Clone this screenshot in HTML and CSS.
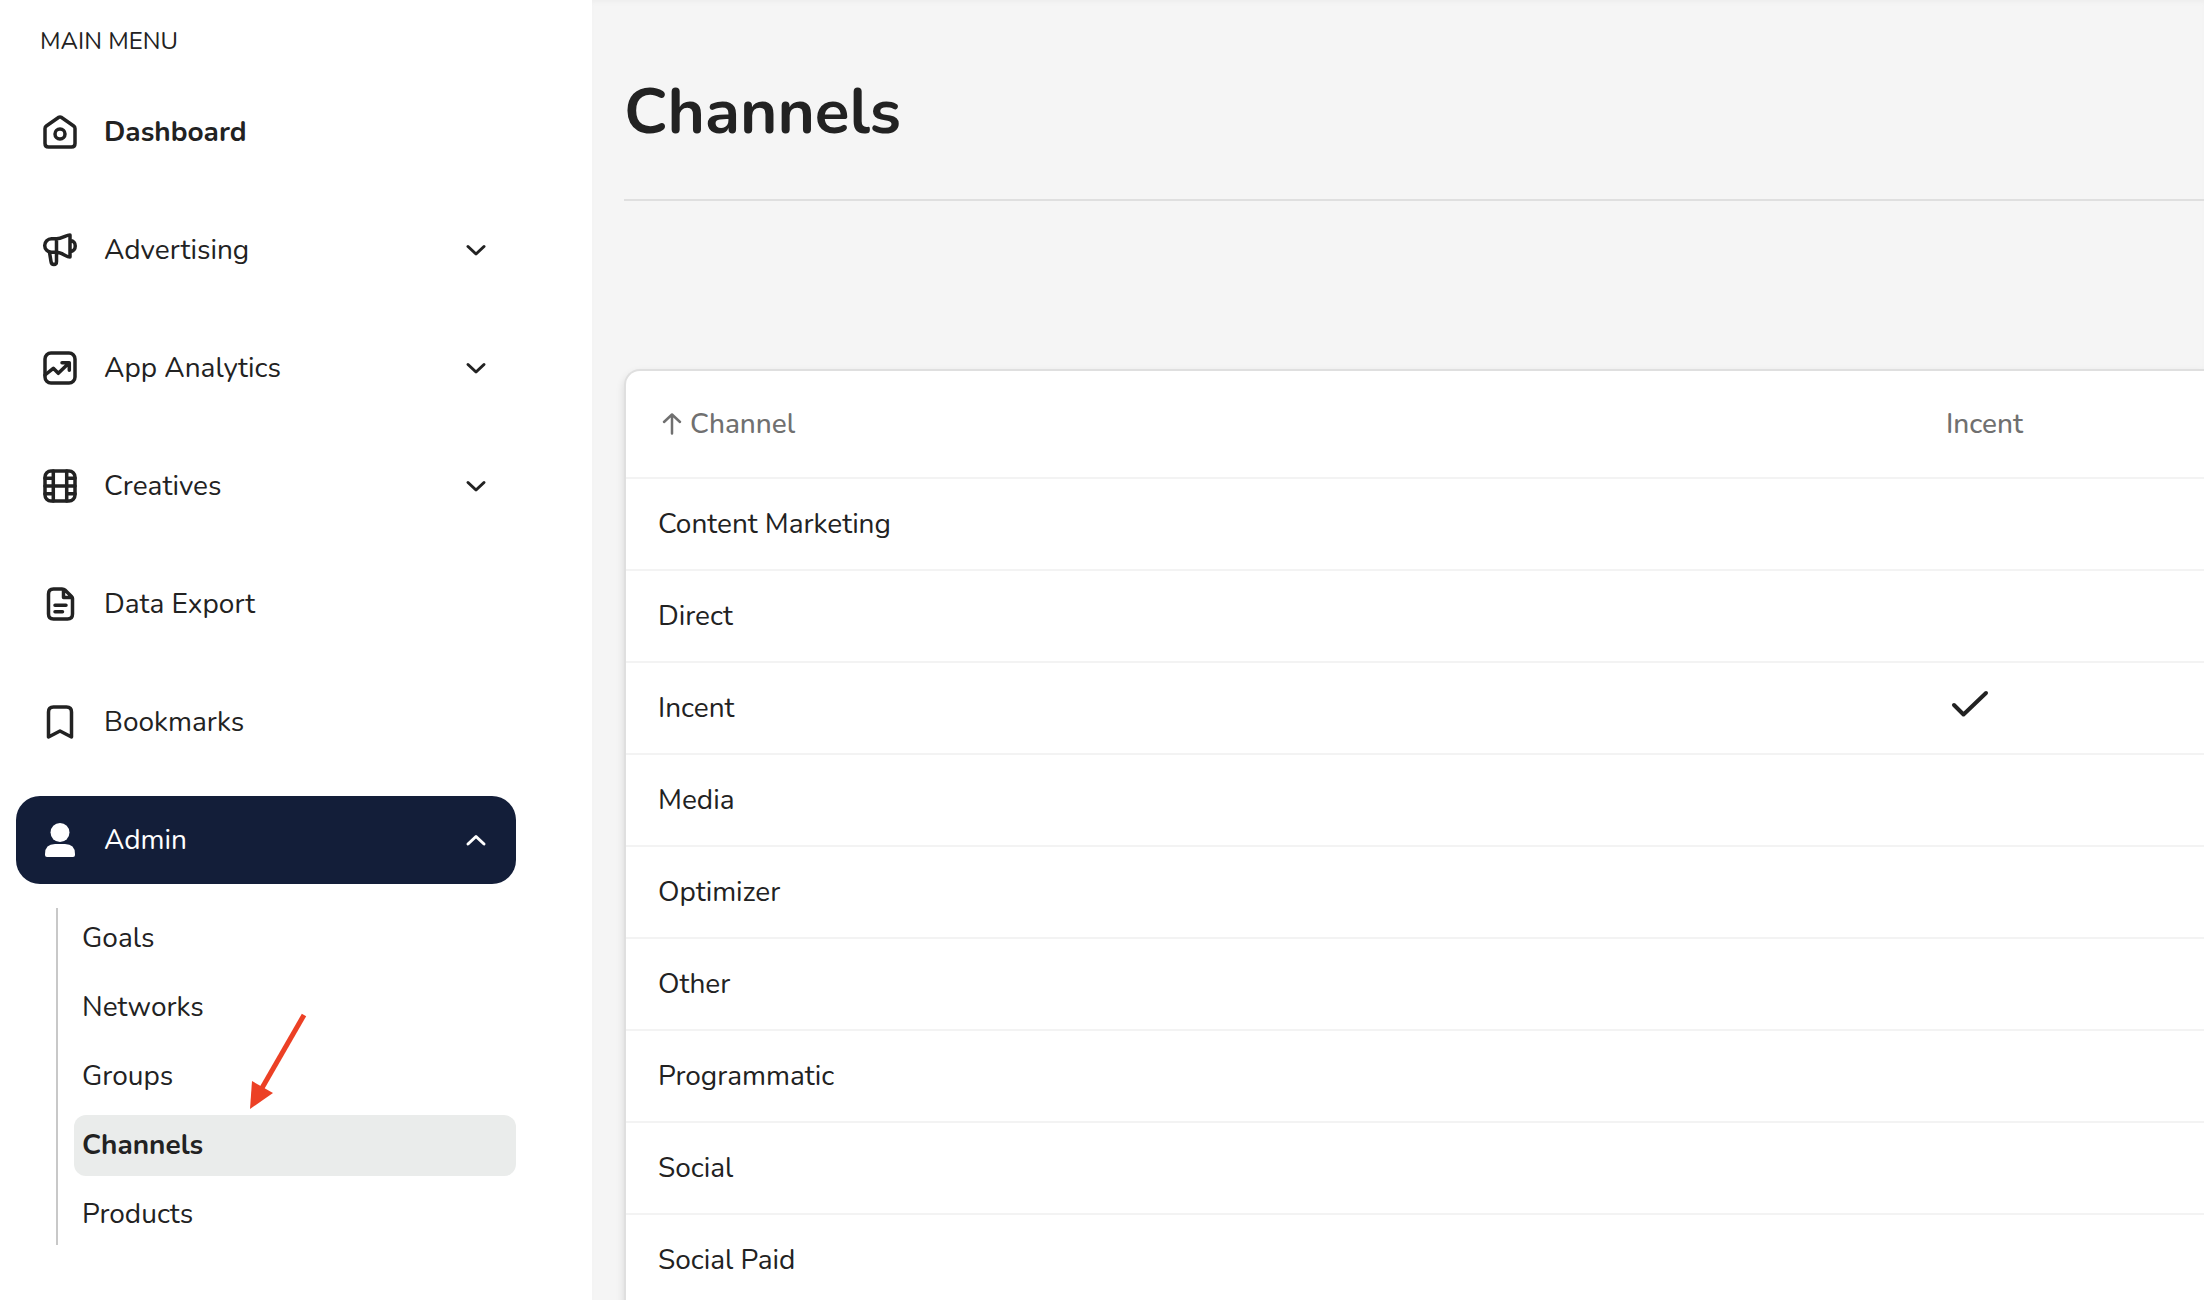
FILE: index.html
```html
<!DOCTYPE html>
<html lang="en">
<head>
<meta charset="utf-8">
<meta name="viewport" content="width=device-width, initial-scale=1">
<title>Channels</title>
<link rel="stylesheet" href="styles.css">
</head>
<body>
<div class="app">
  <aside class="sidebar">
    <h2 class="menu-title">MAIN MENU</h2>
    <nav class="menu" aria-label="Main menu">
      <a class="item item-strong" href="#dashboard">
        <svg class="icon" viewBox="0 0 36 36"><path d="M3 14.500Q3 13 4.300 12L16.800 3.300Q18 2.500 19.200 3.300L31.700 12Q33 13 33 14.500V29.500Q33 33 29.500 33H6.500Q3 33 3 29.500Z"/><circle cx="18" cy="20" r="5"/></svg>
        <span class="label">Dashboard</span>
      </a>
      <button class="item" type="button">
        <svg class="icon" viewBox="0 0 36 36"><path d="M14.500 6.700H9.500A6.800 6.800 0 0 0 9.500 20.300H14.500ZM14.500 6.700C20 6.700 24 3 28 3V25C24 25 20 20.300 14.500 20.300M28 8.500C35 8.500 35 19.500 28 19.500M7.500 20.300L9 29.500C9.500 33.500 14.500 33.500 14.500 29.500V20.300"/></svg>
        <span class="label">Advertising</span>
        <svg class="chevron" viewBox="0 0 24 24"><path d="M4 8.500L12 16L20 8.500"/></svg>
      </button>
      <button class="item" type="button">
        <svg class="icon" viewBox="0 0 36 36"><rect x="3" y="3" width="30" height="30" rx="6"/><path d="M3 25L11.300 18.300L16.300 23.300L27 13M20 12.800H27.300V20.300"/></svg>
        <span class="label">App Analytics</span>
        <svg class="chevron" viewBox="0 0 24 24"><path d="M4 8.500L12 16L20 8.500"/></svg>
      </button>
      <button class="item" type="button">
        <svg class="icon" viewBox="0 0 36 36"><rect x="3" y="3" width="30" height="30" rx="6"/><path d="M11.300 3V33M24.700 3V33M3 18H33M3 10.300H11.300M3 25.700H11.300M24.700 10.300H33M24.700 25.700H33"/></svg>
        <span class="label">Creatives</span>
        <svg class="chevron" viewBox="0 0 24 24"><path d="M4 8.500L12 16L20 8.500"/></svg>
      </button>
      <a class="item" href="#data-export">
        <svg class="icon" viewBox="0 0 36 36"><path d="M20 3H11.500Q6.500 3 6.500 8V28Q6.500 33 11.500 33H25.500Q30.500 33 30.500 28V12.500Q30.500 11.500 29.500 10.500L23 4Q22 3 20 3ZM21.500 3.500V11.500H30M13 19.300H24M13 25.700H20.500"/></svg>
        <span class="label">Data Export</span>
      </a>
      <a class="item" href="#bookmarks">
        <svg class="icon" viewBox="0 0 36 36"><path d="M6.500 33V8Q6.500 3 11.500 3H24.500Q29.500 3 29.500 8V33L18 27Z"/></svg>
        <span class="label">Bookmarks</span>
      </a>
      <button class="item item-active" type="button" aria-expanded="true">
        <svg class="icon icon-solid" viewBox="0 0 36 36"><circle cx="18" cy="10.500" r="9.500"/><path d="M3 32Q3 22 13 22H23Q33 22 33 32V33Q33 35 31 35H5Q3 35 3 33Z"/></svg>
        <span class="label">Admin</span>
        <svg class="chevron" viewBox="0 0 24 24"><path d="M4 16L12 8.500L20 16"/></svg>
      </button>
    </nav>
    <div class="submenu">
      <a class="subitem" href="#goals">Goals</a>
      <a class="subitem" href="#networks">Networks</a>
      <a class="subitem" href="#groups">Groups</a>
      <a class="subitem subitem-current" href="#channels" aria-current="page">Channels
        <svg class="pointer" viewBox="0 0 60 96"><path class="pointer-line" d="M54 2L12 75"/><path class="pointer-head" d="M0 96L2 68L23 80Z"/></svg>
      </a>
      <a class="subitem" href="#products">Products</a>
    </div>
  </aside>
  <main class="content">
    <h1 class="page-title">Channels</h1>
    <div class="card">
      <table class="table">
        <thead>
          <tr>
            <th scope="col"><button class="sort" type="button"><svg class="sort-icon" viewBox="0 0 24 24"><path d="M12 21.500V3M4 10L12 2.500L20 10"/></svg>Channel</button></th>
            <th scope="col" class="col-incent">Incent</th>
          </tr>
        </thead>
        <tbody>
          <tr><td>Content Marketing</td><td></td></tr>
          <tr><td>Direct</td><td></td></tr>
          <tr><td>Incent</td><td><svg class="check" role="img" aria-label="Yes" viewBox="0 0 48 36"><path d="M8 19L17.500 28.500L40 7"/></svg></td></tr>
          <tr><td>Media</td><td></td></tr>
          <tr><td>Optimizer</td><td></td></tr>
          <tr><td>Other</td><td></td></tr>
          <tr><td>Programmatic</td><td></td></tr>
          <tr><td>Social</td><td></td></tr>
          <tr><td>Social Paid</td><td></td></tr>
        </tbody>
      </table>
    </div>
  </main>
</div>
</body>
</html>
```
FILE: styles.css
```css
* {
  box-sizing: border-box;
}

body {
  margin: 0;
  background: #fff;
  color: #222;
  font: 400 28px/40px Nunito, Lato, sans-serif;
}

a {
  color: inherit;
  text-decoration: none;
}

button {
  border: 0;
  background: none;
  color: inherit;
  font: inherit;
  text-align: left;
}

svg {
  fill: none;
  stroke: currentColor;
  stroke-width: 3;
  stroke-linecap: round;
  stroke-linejoin: round;
}

.app {
  display: grid;
  grid-template-columns: 592px minmax(0, 1fr);
  height: 100vh;
  overflow: hidden;
}

/* Sidebar */

.sidebar {
  padding: 24px 76px 24px 16px;
}

.menu-title {
  margin: 0 0 30px;
  padding-left: 24px;
  font-size: 24px;
  line-height: 34px;
  font-weight: 400;
}

.menu {
  display: flex;
  flex-direction: column;
  gap: 30px;
}

.item {
  display: flex;
  align-items: center;
  gap: 26px;
  width: 100%;
  height: 88px;
  padding: 0 28px 0 26px;
  border-radius: 24px;
}

.item-strong {
  font-weight: 700;
}

.item-active {
  background: #131e39;
  color: #fff;
}

.icon {
  flex: none;
  width: 36px;
  height: 36px;
  stroke-width: 3.5;
}

.icon-solid {
  fill: currentColor;
  stroke: none;
}

.label {
  flex: 1;
}

.chevron {
  flex: none;
  width: 24px;
  height: 24px;
}

.submenu {
  display: flex;
  flex-direction: column;
  gap: 8px;
  margin: 24px 0 0 40px;
  padding-left: 16px;
  border-left: 2px solid #c8c8c8;
}

.subitem {
  position: relative;
  height: 61px;
  padding: 10px 8px;
  border-radius: 12px;
}

.subitem-current {
  background: #eaeceb;
  font-weight: 700;
}

/* Callout arrow that floats over the submenu */
.pointer {
  position: absolute;
  left: 176px;
  bottom: 67px;
  width: 60px;
  height: 96px;
}

.pointer-line {
  stroke: #ec4025;
  stroke-width: 5;
  stroke-linecap: butt;
}

.pointer-head {
  fill: #ec4025;
  stroke: none;
}

/* Content */

.content {
  padding: 64px 0 0 32px;
  background: #f5f5f5;
  box-shadow: inset 0 4px 4px -2px #ededed;
}

.page-title {
  margin: 0 0 168px;
  padding-bottom: 39px;
  border-bottom: 2px solid #dfdfdf;
  font-size: 64px;
  line-height: 96px;
  font-weight: 700;
}

.card {
  border: 2px solid #dfdfdf;
  border-right: 0;
  border-radius: 16px 0 0 0;
  background: #fff;
  box-shadow: 0 4px 8px #0000001f;
}

.table {
  width: 100%;
  border-collapse: separate;
  border-spacing: 0;
  table-layout: fixed;
}

.table th,
.table td {
  height: 92px;
  padding: 0 32px;
  border-bottom: 2px solid #f3f3f3;
  text-align: left;
}

.table th {
  height: 108px;
  color: #707070;
  font-weight: 500;
}

.table .col-incent {
  width: 290px;
}

.sort {
  display: flex;
  align-items: center;
  gap: 6px;
  padding: 0 2px;
}

.sort-icon {
  width: 24px;
  height: 24px;
  stroke-width: 2.5;
}

.check {
  display: block;
  width: 48px;
  height: 36px;
  margin-bottom: 8px;
  stroke-width: 4;
}
```
